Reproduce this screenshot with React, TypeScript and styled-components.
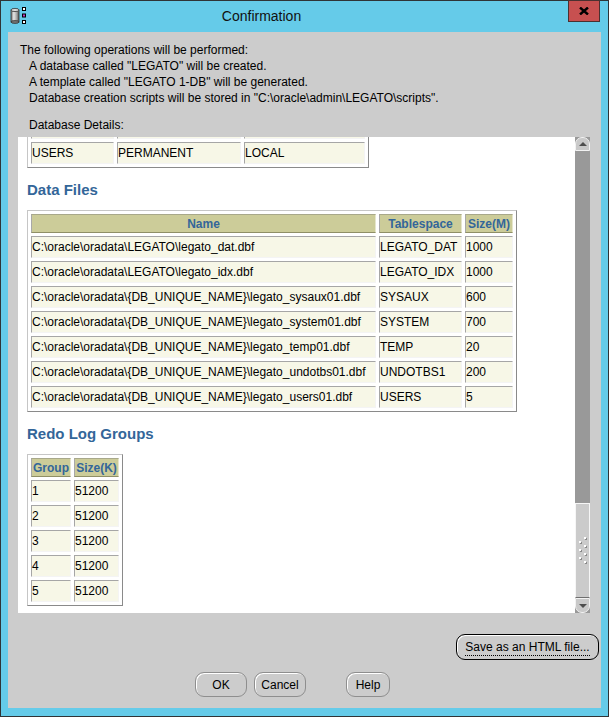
import React from "react";
import styled, { createGlobalStyle } from "styled-components";

const GlobalStyle = createGlobalStyle`
  html, body {
    margin: 0;
    padding: 0;
  }
  body {
    width: 609px;
    height: 717px;
    overflow: hidden;
    background: #2b2b2b;
    font-family: "Liberation Sans", Arial, sans-serif;
  }
`;

type Row = string[];
type Column = { label: string; width: number };

// tail of the tablespaces table; the rest is scrolled out of view
const tablespaces: Row[] = [
  ["UNDOTBS1", "UNDO", "LOCAL"],
  ["USERS", "PERMANENT", "LOCAL"],
];

const dataFiles: Row[] = [
  ["C:\\oracle\\oradata\\LEGATO\\legato_dat.dbf", "LEGATO_DAT", "1000"],
  ["C:\\oracle\\oradata\\LEGATO\\legato_idx.dbf", "LEGATO_IDX", "1000"],
  ["C:\\oracle\\oradata\\{DB_UNIQUE_NAME}\\legato_sysaux01.dbf", "SYSAUX", "600"],
  ["C:\\oracle\\oradata\\{DB_UNIQUE_NAME}\\legato_system01.dbf", "SYSTEM", "700"],
  ["C:\\oracle\\oradata\\{DB_UNIQUE_NAME}\\legato_temp01.dbf", "TEMP", "20"],
  ["C:\\oracle\\oradata\\{DB_UNIQUE_NAME}\\legato_undotbs01.dbf", "UNDOTBS1", "200"],
  ["C:\\oracle\\oradata\\{DB_UNIQUE_NAME}\\legato_users01.dbf", "USERS", "5"],
];

const redoGroups: Row[] = [1, 2, 3, 4, 5].map((g) => [String(g), "51200"]);

interface TableProps {
  columns: Column[];
  rows: Row[];
  showHead?: boolean;
}

function ReportTable({ columns, rows, showHead = true }: TableProps) {
  return (
    <Table>
      {showHead && (
        <thead>
          <tr>
            {columns.map((c) => (
              <HeadCell key={c.label} $w={c.width}>
                {c.label}
              </HeadCell>
            ))}
          </tr>
        </thead>
      )}
      <tbody>
        {rows.map((r, i) => (
          <tr key={i}>
            {r.map((v, j) => (
              <Cell key={j} $w={columns[j].width}>
                {v}
              </Cell>
            ))}
          </tr>
        ))}
      </tbody>
    </Table>
  );
}

function AppIcon() {
  return (
    <svg width="17" height="17" viewBox="0 0 17 17">
      <defs>
        <linearGradient id="cyl" x1="0" x2="1" y1="0" y2="0">
          <stop offset="0" stopColor="#6e6e6e" />
          <stop offset="0.35" stopColor="#e8e8e8" />
          <stop offset="0.7" stopColor="#a8a8a8" />
          <stop offset="1" stopColor="#555" />
        </linearGradient>
      </defs>
      <rect x="1" y="3" width="8" height="12" fill="url(#cyl)" stroke="#333" strokeWidth="0.8" />
      <ellipse cx="5" cy="3" rx="4" ry="1.6" fill="#d8d8d8" stroke="#333" strokeWidth="0.8" />
      <ellipse cx="5" cy="15" rx="4" ry="1.4" fill="#777" stroke="#333" strokeWidth="0.8" />
      <rect x="12.5" y="0.5" width="3" height="3" fill="#fff" stroke="#000" />
      <rect x="12.5" y="7" width="3" height="3" fill="#c23bc2" stroke="#000" />
      <rect x="12.5" y="13.5" width="3" height="3" fill="#fff" stroke="#000" />
    </svg>
  );
}

function GripDots() {
  const dots = [
    [6, 0],
    [1, 4],
    [6, 8],
    [1, 12],
    [6, 16],
    [1, 20],
    [6, 24],
  ];
  return (
    <svg width="10" height="27" viewBox="0 0 10 27">
      {dots.map(([x, y], i) => (
        <g key={i}>
          <rect x={x + 1} y={y + 1} width="2" height="2" fill="#8a8a8a" />
          <rect x={x} y={y} width="2" height="2" fill="#fff" />
        </g>
      ))}
    </svg>
  );
}

export default function App() {
  return (
    <>
      <GlobalStyle />
      <Window>
        <TitleBar>
          <IconSlot>
            <AppIcon />
          </IconSlot>
          <Title>Confirmation</Title>
          <CloseButton aria-label="Close">
            <svg width="10" height="8" viewBox="0 0 10 8">
              <path d="M1 0.5 L9 7.5 M9 0.5 L1 7.5" stroke="#000" strokeWidth="2.4" />
            </svg>
          </CloseButton>
        </TitleBar>

        <Frame>
          <Client>
            <Message>
              <Line>The following operations will be performed:</Line>
              <Line $indent>A database called "LEGATO" will be created.</Line>
              <Line $indent>A template called "LEGATO 1-DB" will be generated.</Line>
              <Line $indent>
                Database creation scripts will be stored in "C:\oracle\admin\LEGATO\scripts".
              </Line>
            </Message>
            <DetailsLabel>Database Details:</DetailsLabel>

            <ScrollPane>
              <Viewport>
                <ReportTable
                  showHead={false}
                  columns={[
                    { label: "Name", width: 83 },
                    { label: "Type", width: 124 },
                    { label: "Extent Management", width: 121 },
                  ]}
                  rows={tablespaces}
                />

                <Heading>Data Files</Heading>
                <ReportTable
                  columns={[
                    { label: "Name", width: 345 },
                    { label: "Tablespace", width: 83 },
                    { label: "Size(M)", width: 48 },
                  ]}
                  rows={dataFiles}
                />

                <Heading>Redo Log Groups</Heading>
                <ReportTable
                  columns={[
                    { label: "Group", width: 40 },
                    { label: "Size(K)", width: 45 },
                  ]}
                  rows={redoGroups}
                />
              </Viewport>

              <ScrollBar>
                <ArrowButton $dir="up">
                  <Arrow $dir="up" />
                </ArrowButton>
                <Track>
                  <Thumb>
                    <GripDots />
                  </Thumb>
                </Track>
                <ArrowButton $dir="down">
                  <Arrow $dir="down" />
                </ArrowButton>
              </ScrollBar>
            </ScrollPane>

            <SaveRow>
              <PushButton $w={143} $default>
                <FocusText>Save as an HTML file...</FocusText>
              </PushButton>
            </SaveRow>

            <ButtonRow>
              <ButtonGroup>
                <PushButton $w={52}>OK</PushButton>
                <PushButton $w={52}>Cancel</PushButton>
              </ButtonGroup>
              <PushButton $w={44}>Help</PushButton>
            </ButtonRow>
          </Client>
        </Frame>
      </Window>
    </>
  );
}

const Window = styled.div`
  box-sizing: border-box;
  width: 609px;
  height: 717px;
  border: 1px solid #2f3437;
  background: #65cbe9;
  display: flex;
  flex-direction: column;
`;

const TitleBar = styled.div`
  display: flex;
  align-items: flex-start;
  height: 31px;
  flex-shrink: 0;
`;

const IconSlot = styled.div`
  margin: 6px 0 0 9px;
  width: 17px;
  height: 17px;
`;

const Title = styled.div`
  flex: 1;
  text-align: center;
  line-height: 30px;
  padding-right: 72px;
  font-family: "Liberation Sans", Arial, sans-serif;
  font-size: 14px;
  color: #111;
`;

const CloseButton = styled.div`
  box-sizing: border-box;
  width: 32px;
  height: 22px;
  margin: -1px 8px 0 0;
  background: #c75050;
  border: 1px solid #4a3030;
  display: flex;
  align-items: center;
  justify-content: center;
`;

const Frame = styled.div`
  flex: 1;
  display: flex;
  padding: 0 7px 8px 7px;
`;

const Client = styled.div`
  flex: 1;
  display: flex;
  flex-direction: column;
  background: #cccccc;
  padding: 10px 2px 11px 10px;
  font-family: "Liberation Sans", Arial, sans-serif;
  font-size: 12px;
  color: #000;
`;

const Message = styled.div`
  padding-left: 2px;
`;

const Line = styled.div<{ $indent?: boolean }>`
  line-height: 16px;
  white-space: nowrap;
  padding-left: ${(p) => (p.$indent ? 9 : 0)}px;
`;

const DetailsLabel = styled.div`
  margin-top: 11px;
  padding-left: 11px;
  line-height: 16px;
`;

const ScrollPane = styled.div`
  display: flex;
  height: 476px;
  margin: 4px 9px 0 0;
`;

// content pinned to the bottom: the pane is scrolled all the way down
const Viewport = styled.div`
  flex: 1;
  background: #ffffff;
  overflow: hidden;
  display: flex;
  flex-direction: column;
  justify-content: flex-end;
  align-items: flex-start;
  padding: 0 0 7px 9px;

  & > * {
    flex-shrink: 0;
  }
`;

const Heading = styled.h3`
  margin: 13px 0 11px;
  font-family: "Liberation Sans", Arial, sans-serif;
  font-size: 15px;
  line-height: 18px;
  font-weight: bold;
  color: #336699;
`;

const Table = styled.table`
  border-collapse: separate;
  border-spacing: 3px;
  border: 1px solid;
  border-color: #c6c6c6 #8a8a8a #8a8a8a #c6c6c6;
  font-family: "Liberation Sans", Arial, sans-serif;
  font-size: 12px;
`;

const HeadCell = styled.th<{ $w: number }>`
  box-sizing: border-box;
  width: ${(p) => p.$w}px;
  height: 19px;
  padding: 0;
  background: #cccc99;
  color: #336699;
  font-weight: bold;
  text-align: center;
  white-space: nowrap;
  border: 1px solid;
  border-color: #a8a88a #e6e6cc #8f8f66 #a8a8a8;
`;

const Cell = styled.td<{ $w: number }>`
  box-sizing: border-box;
  width: ${(p) => p.$w}px;
  height: 22px;
  padding: 0 1px 0 0;
  background: #f7f7e7;
  color: #000;
  white-space: nowrap;
  vertical-align: middle;
  border: 1px solid;
  border-color: #a6a6a6 #f4f4f4 #f4f4f4 #a6a6a6;
`;

const ScrollBar = styled.div`
  width: 15px;
  display: flex;
  flex-direction: column;
  background: #999999;
`;

const ArrowButton = styled.div<{ $dir: "up" | "down" }>`
  box-sizing: border-box;
  height: ${(p) => (p.$dir === "up" ? 14 : 15)}px;
  background: #c9c9c9;
  border: 1px solid #f2f2f2;
  border-radius: ${(p) => (p.$dir === "up" ? "7px 7px 0 0" : "0 0 7px 7px")};
  display: flex;
  align-items: center;
  justify-content: center;
`;

const Arrow = styled.div<{ $dir: "up" | "down" }>`
  width: 0;
  height: 0;
  border-left: 4px solid transparent;
  border-right: 4px solid transparent;
  ${(p) =>
    p.$dir === "up"
      ? "border-bottom: 4px solid #4d4d4d;"
      : "border-top: 4px solid #4d4d4d;"}
`;

const Track = styled.div`
  flex: 1;
  display: flex;
  flex-direction: column;
  justify-content: flex-end;
`;

const Thumb = styled.div`
  box-sizing: border-box;
  height: 95px;
  background: #cbcbcb;
  border: 1px solid #f6f6f6;
  border-bottom-color: #6f6f6f;
  display: flex;
  align-items: center;
  justify-content: center;
`;

const SaveRow = styled.div`
  display: flex;
  justify-content: flex-end;
  margin-top: 21px;
`;

const ButtonRow = styled.div`
  display: flex;
  gap: 40px;
  margin-top: 12px;
  padding-left: 177px;
`;

const ButtonGroup = styled.div`
  display: flex;
  gap: 7px;
`;

const PushButton = styled.button<{ $w: number; $default?: boolean }>`
  box-sizing: border-box;
  width: ${(p) => p.$w}px;
  height: ${(p) => (p.$default ? 26 : 25)}px;
  padding: 0;
  border-radius: 9px;
  border: 1px solid ${(p) => (p.$default ? "#000" : "#8e8e8e")};
  background: #cccccc;
  box-shadow: inset 1px 1px 0 #ffffff;
  font-family: "Liberation Sans", Arial, sans-serif;
  font-size: 12px;
  color: #000;
`;

const FocusText = styled.span`
  border-bottom: 1px dotted #000;
  padding-bottom: 1px;
`;
